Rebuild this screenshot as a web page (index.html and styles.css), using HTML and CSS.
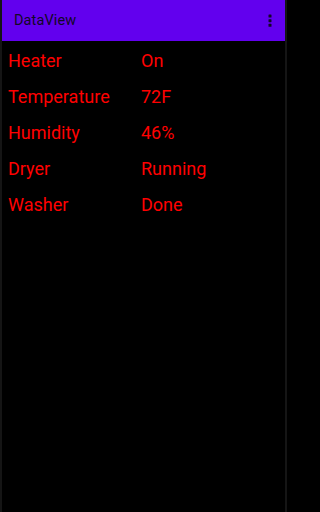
FILE: index.html
```html
<!DOCTYPE html>
<html>
<head>
<meta charset="utf-8">
<link rel="stylesheet" href="styles.css">
</head>
<body>
<div class="frame">
  <header class="appbar">
    <span class="title">DataView</span>
    <svg class="menu" width="4" height="14" viewBox="0 0 4 14">
      <rect x="0.5" y="0.5" width="3" height="3" rx="0.6"/>
      <rect x="0.5" y="5.2" width="3" height="3" rx="0.6"/>
      <rect x="0.5" y="9.8" width="3" height="3" rx="0.6"/>
    </svg>
  </header>
  <main class="list">
    <div class="row"><span class="label">Heater</span><span class="value">On</span></div>
    <div class="row"><span class="label">Temperature</span><span class="value">72F</span></div>
    <div class="row"><span class="label">Humidity</span><span class="value">46%</span></div>
    <div class="row"><span class="label">Dryer</span><span class="value">Running</span></div>
    <div class="row"><span class="label">Washer</span><span class="value">Done</span></div>
  </main>
</div>
</body>
</html>
```
FILE: styles.css
```css
html, body {
  margin: 0;
  padding: 0;
  background: #000;
  height: 100%;
}
body {
  font-family: Roboto, "Liberation Sans", sans-serif;
}
.frame {
  box-sizing: border-box;
  width: 287px;
  height: 100%;
  border-left: 2px solid #151515;
  border-right: 2px solid #151515;
  background: #000;
}
.appbar {
  height: 41px;
  background: #6200ee;
  display: flex;
  align-items: center;
  justify-content: space-between;
  padding: 0 13px 0 12px;
}
.title {
  font-size: 14.5px;
  color: #120826;
  letter-spacing: 0.1px;
}
.menu {
  fill: #14062a;
  margin-top: 1px;
}
.list {
  padding: 2px 0 0 6px;
}
.row {
  display: grid;
  grid-template-columns: 133px 1fr;
  height: 36px;
  line-height: 36px;
  font-size: 18px;
  color: #ff0000;
}
```
